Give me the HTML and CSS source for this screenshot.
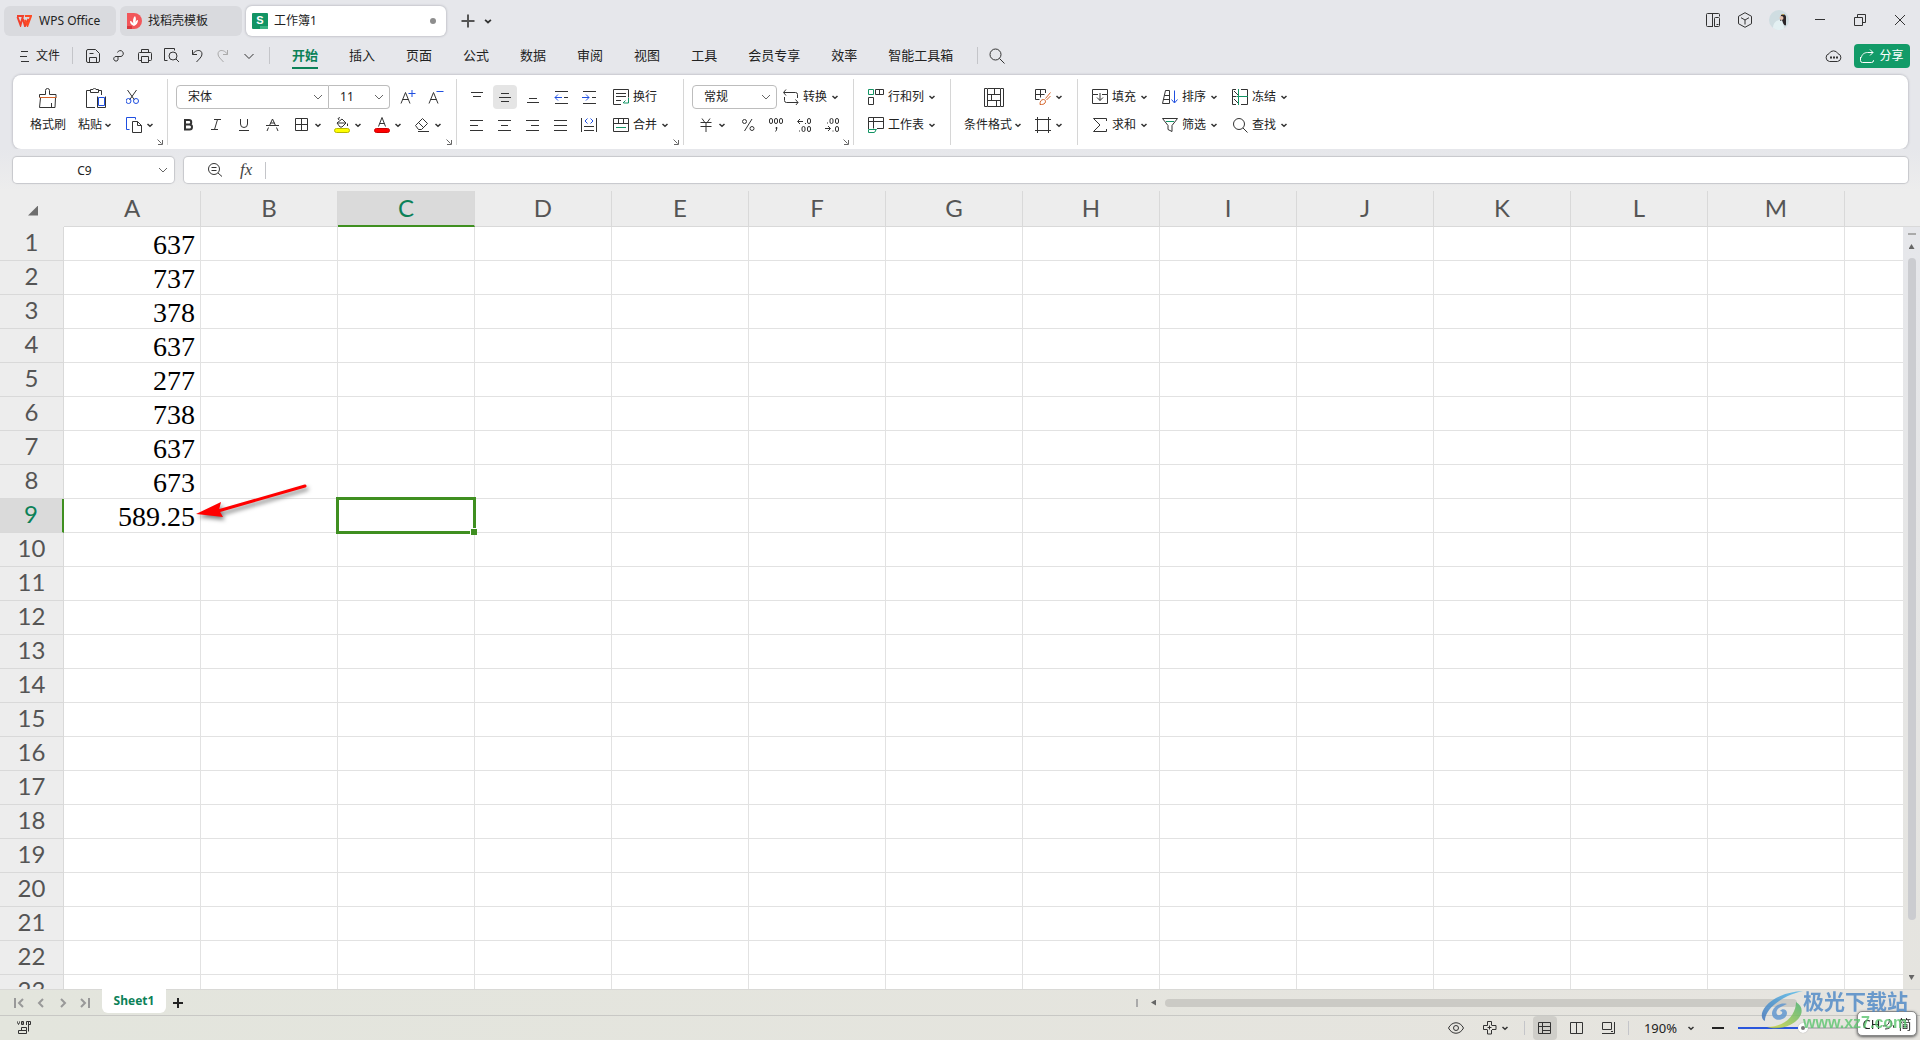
FILE: index.html
```html
<!DOCTYPE html>
<html lang="zh-CN">
<head>
<meta charset="utf-8">
<title>工作簿1 - WPS Office</title>
<link rel="stylesheet" href="styles.css">
</head>
<body>
<svg width="0" height="0" class="defs" aria-hidden="true">
  <symbol id="chev" viewBox="0 0 12 12"><path d="M3.500 5l2.500 2.300L8.500 5" fill="none" stroke="#333" stroke-width="1.500"/></symbol>
  <symbol id="chev-wide" viewBox="0 0 12 12"><path d="M2 4l4 4 4-4" fill="none" stroke="#666"/></symbol>
  <symbol id="launcher" viewBox="0 0 6 6"><path d="M.5.5l4 4M5.500 1v4.500H1" fill="none" stroke="#666"/></symbol>
</svg>

<header class="titlebar">
  <div class="tabs">
    <button class="tab tab-home">
      <svg width="16" height="12" viewBox="0 0 16 12" fill="none" stroke-width="2"><path d="M1 1h6l-2.500 9L1.500 2M7 4l2 7 3.500-7" stroke="#f0402c"/><path d="M9 1h6l-3.500 9.500L9 5" stroke="#ff4a22"/></svg>
      WPS Office</button>
    <button class="tab tab-docer">
      <svg width="16" height="16" viewBox="0 0 16 16"><path d="M1 0h7a7.500 7.500 0 0 1 0 16H1z" fill="#f2565a"/><path d="M1 13h5v3H1z" fill="#d8383e"/><path d="M8 13c-3-1-4-3-4-5 2 0 3 2 3.500 3C6.500 8 7 4.500 9 3c1.500 2 1 5 0 7 .5-1.500 1.500-3 3-3 0 3-1.500 5-4 6z" fill="#fff"/></svg>
      找稻壳模板</button>
    <button class="tab tab-active">
      <svg width="16" height="16" viewBox="0 0 16 16"><rect width="16" height="16" rx="1" fill="#129464"/><path d="M8 13h8v2a1 1 0 0 1-1 1H8z" fill="#3bb384"/><text x="8" y="11" text-anchor="middle" class="logo-s">S</text></svg>
      工作簿1<span class="dot"></span></button>
  </div>
  <button class="icon-btn" aria-label="新建"><svg width="14" height="14" viewBox="0 0 14 14" class="i bold"><path d="M7 .5v13M.5 7h13"/></svg></button>
  <button class="icon-btn narrow" aria-label="标签列表"><svg width="14" height="14"><use href="#chev"/></svg></button>
  <div class="window-tools">
    <button aria-label="侧栏"><svg width="15" height="15" viewBox="0 0 15 15" class="i"><path d="M13.500 3.500v-2a1 1 0 0 0-1-1h-11a1 1 0 0 0-1 1v11a1 1 0 0 0 1 1h5.500M6.500 13.500V.5"/><path d="M8.500 13.500v-8a1 1 0 0 1 1-1h3a1 1 0 0 1 1 1v7a1 1 0 0 1-1 1zM10.500 11.500h2"/></svg></button>
    <button aria-label="应用"><svg width="16" height="16" viewBox="0 0 16 16" class="i"><path d="M8 .7l6.500 3.600v7.400L8 15.300l-6.500-3.600V4.300zM4 5.700L8 8l4-2.300M8 8v4.500"/></svg></button>
    <button aria-label="账户"><svg width="20" height="20" viewBox="0 0 20 20"><circle cx="10" cy="10" r="10" fill="#cfdde1"/><path d="M4 18c0-4 2-7 6-8l4 1 1 7.500a10 10 0 0 1-11-.5z" fill="#e3f0f2"/><path d="M12 5c3-2 5 0 5 2v8c-1 1-2 0-3-2l-1-3-2 1z" fill="#2a2528"/><circle cx="12.500" cy="8" r="2" fill="#e6c2ae"/><path d="M12 5l3-1v1z" fill="#d5a93c"/></svg></button>
    <button aria-label="最小化"><svg width="12" height="12" viewBox="0 0 12 12" class="i"><path d="M1 5.500h10"/></svg></button>
    <button aria-label="还原"><svg width="12" height="12" viewBox="0 0 12 12" class="i"><path d="M.5 3.500h8v8h-8zM3.500 3.500v-3h8v8h-3"/></svg></button>
    <button aria-label="关闭"><svg width="12" height="12" viewBox="0 0 12 12" class="i"><path d="M1 1l10 10M11 1L1 11"/></svg></button>
  </div>
</header>

<nav class="menubar">
  <button class="file"><svg width="9" height="12" viewBox="0 0 9 12" class="i"><path d="M1 1.500h7M0 6.500h7M1 11.500h8"/></svg>文件</button>
  <span class="sep"></span>
  <div class="quick">
    <button aria-label="保存"><svg width="14" height="14" viewBox="0 0 14 14" class="i"><path d="M2 .5h7.500l4 4V12a1.500 1.500 0 0 1-1.500 1.500H2A1.500 1.500 0 0 1 .5 12V2A1.500 1.500 0 0 1 2 .5zM3.500 13.500v-5h7v5M3.500 4.500h4"/></svg></button>
    <button aria-label="链接"><svg width="14" height="14" viewBox="0 0 14 14" class="i"><path d="M5.500 3.500a3 3 0 1 1 3.500 4H4a2.300 2.300 0 1 0 2 3.500V7.500"/></svg></button>
    <button aria-label="打印"><svg width="14" height="14" viewBox="0 0 14 14" class="i"><path d="M3.500 3.500v-3h7v3M3.500 11.500h-2a1 1 0 0 1-1-1v-6a1 1 0 0 1 1-1h11a1 1 0 0 1 1 1v6a1 1 0 0 1-1 1h-2M3.500 7.500h7v6h-7z"/></svg></button>
    <button aria-label="打印预览"><svg width="15" height="15" viewBox="0 0 15 15" class="i"><path d="M3.500 12.500H.5V.5h10v2"/><circle cx="9" cy="8" r="4"/><path d="M12 11l3 3"/></svg></button>
    <button aria-label="撤销"><svg width="12" height="14" viewBox="0 0 12 14" class="i"><path d="M1.500 1v4.500H6M1.500 5.500C4 .5 11 0 11 5c0 3-3 5-5.500 8"/></svg></button>
    <button aria-label="恢复" disabled><svg width="12" height="14" viewBox="0 0 12 14" class="i faint"><path d="M10.500 1v4.500H6M10.500 5.500C8 .5 1 0 1 5c0 3 3 5 5.500 8"/></svg></button>
    <button aria-label="更多"><svg width="12" height="12" viewBox="0 0 12 12" class="i"><path d="M1.500 4L6 8.500 10.500 4"/></svg></button>
  </div>
  <span class="sep"></span>
  <div class="menus">
    <a href="#" class="current">开始</a><a href="#">插入</a><a href="#">页面</a><a href="#">公式</a><a href="#">数据</a><a href="#">审阅</a><a href="#">视图</a><a href="#">工具</a><a href="#">会员专享</a><a href="#">效率</a><a href="#">智能工具箱</a>
  </div>
  <span class="sep"></span>
  <button class="search" aria-label="搜索"><svg width="16" height="16" viewBox="0 0 16 16" class="i"><circle cx="6.500" cy="6.500" r="5.500"/><path d="M10.500 10.500l5 5"/></svg></button>
  <div class="menu-right">
    <button aria-label="云同步"><svg width="17" height="14" viewBox="0 0 17 14" class="i"><path d="M4.500 12.500h8a4 4 0 0 0 .5-7.800 5 5 0 0 0-9 0 4 4 0 0 0 .5 7.800z"/><path d="M5 8.500h2M8 8.500h2M11 8.500h2" stroke-width="2"/></svg></button>
    <button class="share"><svg width="14" height="14" viewBox="0 0 14 14" class="i"><path d="M.5 8v3.500a2 2 0 0 0 2 2h9a2 2 0 0 0 2-2V11M1.500 8.500c0-3 3-5 6-5H13M10 .5l3 3-3 3"/></svg>分享</button>
  </div>
</nav>

<section class="ribbon" aria-label="功能区">
  <div class="group clip">
    <button class="big"><svg width="20" height="20" viewBox="0 0 20 20" class="i"><path d="M1.500 9.500v-3h6V2.500a2 2 0 0 1 4 0v4h6.500v3M2.500 10l-1 9.500h15.500L17.500 10M13.500 15v4.500"/><path d="M1.500 9.500h17" stroke="#d4642a"/></svg><span>格式刷</span></button>
    <button class="big"><svg width="20" height="20" viewBox="0 0 20 20" class="i"><path d="M9 19.500H.5v-17h4M12.500 2.500h3V7M4.500 4.500v-3h2.500c0-1.500 3-1.500 3 0h2.500v3z"/><path d="M11.500 8.500v11M19.500 8.500v11h-8" /><path d="M12.500 9.500h6v8h-6z" stroke="#1f4fe0"/></svg><span>粘贴<svg class="chev"><use href="#chev"/></svg></span></button>
    <div class="stack">
      <button class="t" aria-label="剪切"><svg width="16" height="16" viewBox="2 0 16 16" class="i"><path d="M3.500 1l7 10M12.500 1l-7 10"/><g stroke="#1f4fe0"><circle cx="4.500" cy="12" r="2.500"/><circle cx="12" cy="12" r="2.500"/></g></svg></button>
      <button class="t" aria-label="复制"><svg width="16" height="16" viewBox="0 0 16 16" class="i"><path d="M3.500 12.500H.5V.5h9v2" stroke="#1f4fe0"/><path d="M6.500 4.500h5l4 4v7h-9zM11.500 4.500v4h4"/></svg><svg class="chev"><use href="#chev"/></svg></button>
    </div>
    <svg class="launcher"><use href="#launcher"/></svg>
  </div>

  <div class="group font">
    <div class="row">
      <span class="pick pick-font"><select aria-label="字体"><option>宋体</option></select><svg class="arrow"><use href="#chev-wide"/></svg></span>
      <span class="pick pick-size"><select aria-label="字号"><option>11</option></select><svg class="arrow"><use href="#chev-wide"/></svg></span>
      <button class="b grow" aria-label="增大字号"><svg width="16" height="16" viewBox="0 0 16 16" class="i"><path d="M1 14.500L5.500 3.500 10 14.500M2.500 10.500h6"/><path d="M12 1v7M8.500 4.500h7" stroke="#1f4fe0"/></svg></button>
      <button class="b" aria-label="减小字号"><svg width="16" height="16" viewBox="0 0 16 16" class="i"><path d="M1 14.500L5.500 3.500 10 14.500M2.500 10.500h6"/><path d="M8.500 2.500h7" stroke="#1f4fe0"/></svg></button>
    </div>
    <div class="row">
      <button class="b" aria-label="加粗"><svg width="16" height="16" viewBox="0 0 16 16" class="i"><path class="heavy" d="M5 3h4a2 2 0 0 1 0 4.500H5zM5 7.500h4.500a2.500 2.500 0 0 1 0 5H5z"/></svg></button>
      <button class="b" aria-label="倾斜"><svg width="16" height="16" viewBox="0 0 16 16" class="i"><path d="M6 2.500h7M3 12.500h7M9.500 2.500l-3 10"/></svg></button>
      <button class="b" aria-label="下划线"><svg width="16" height="16" viewBox="0 0 16 16" class="i"><path d="M4.500 2v5a3.500 3.500 0 0 0 7 0V2M3 13.500h10"/></svg></button>
      <button class="b" aria-label="删除线"><svg width="16" height="16" viewBox="0 0 16 16" class="i"><path d="M2 8.500h13M5.500 8.500L8.500 2l3 6.500M4.500 10.500L3 14M12.500 10.500l1.500 3.500M6.500 6h4"/></svg></button>
      <button class="split first" aria-label="边框"><svg width="16" height="16" viewBox="0 0 16 16" class="i"><path d="M1.500 1.500h12v12h-12zM7.500 1.500v12M1.500 7.500h12"/></svg><svg class="chev"><use href="#chev"/></svg></button>
      <button class="split" aria-label="填充颜色"><svg width="16" height="16" viewBox="0 0 16 16" class="i"><path d="M3 6l5-4 4 4-4 4H6zM5 3L4 1.500l2-1M3 6h9M13.500 6.500v2.500"/><rect x=".5" y="11.500" width="15" height="4" rx="2" fill="#ff0" stroke="#b8b800"/></svg><svg class="chev"><use href="#chev"/></svg></button>
      <button class="split" aria-label="字体颜色"><svg width="16" height="16" viewBox="0 0 16 16" class="i"><path d="M4.500 9.500L8 .5l3.500 9M5.500 6.500h5"/><rect x=".5" y="11.500" width="15" height="4" rx="2" fill="#f00" stroke="#c00"/></svg><svg class="chev"><use href="#chev"/></svg></button>
      <button class="split" aria-label="清除"><svg width="16" height="16" viewBox="0 0 16 16" class="i"><path d="M1.500 8.500l7-7 5 5-6 6h-3zM4.500 5.500l5 5M4 14.500h11"/></svg><svg class="chev"><use href="#chev"/></svg></button>
    </div>
    <svg class="launcher"><use href="#launcher"/></svg>
  </div>

  <div class="group align">
    <div class="row">
      <button class="b" aria-label="顶端对齐"><svg width="16" height="16" viewBox="0 0 16 16" class="i"><path d="M2 3.500h12M4 7.500h8"/></svg></button>
      <button class="b on" aria-label="垂直居中"><svg width="16" height="16" viewBox="0 0 16 16" class="i"><path d="M4 4.500h8M2 8.500h12M4 12.500h8"/></svg></button>
      <button class="b" aria-label="底端对齐"><svg width="16" height="16" viewBox="0 0 16 16" class="i"><path d="M4 9.500h8M2 13.500h12"/></svg></button>
      <button class="b" aria-label="减少缩进"><svg width="16" height="16" viewBox="0 0 16 16" class="i"><path d="M2 2.500h13M2 14.500h13M11 8.500h4"/><path d="M9 8.500H2M5 5.500l-3 3 3 3" stroke="#1f4fe0"/></svg></button>
      <button class="b" aria-label="增加缩进"><svg width="16" height="16" viewBox="0 0 16 16" class="i"><path d="M2 2.500h13M2 14.500h13M11 8.500h4"/><path d="M1 8.500h7M5 5.500l3 3-3 3" stroke="#1f4fe0"/></svg></button>
      <button class="t after"><svg width="16" height="16" viewBox="0 0 16 16" class="i"><path d="M8 15.500H.5V.5h15v8M3 4.500h10M3 7.500h10M3 11.500h5"/><path d="M15.500 9v5h-5M12.500 11.500l-2.500 2.500" stroke="#129464"/></svg><span>换行</span></button>
    </div>
    <div class="row">
      <button class="b" aria-label="左对齐"><svg width="16" height="16" viewBox="0 0 16 16" class="i"><path d="M1 3.500h13M1 8.500h8M1 13.500h13"/></svg></button>
      <button class="b" aria-label="居中"><svg width="16" height="16" viewBox="0 0 16 16" class="i"><path d="M1 3.500h13M4 8.500h7M1 13.500h13"/></svg></button>
      <button class="b" aria-label="右对齐"><svg width="16" height="16" viewBox="0 0 16 16" class="i"><path d="M1 3.500h13M6 8.500h8M1 13.500h13"/></svg></button>
      <button class="b" aria-label="两端对齐"><svg width="16" height="16" viewBox="0 0 16 16" class="i"><path d="M1 3.500h13M1 8.500h13M1 13.500h13"/></svg></button>
      <button class="b" aria-label="分散对齐"><svg width="16" height="16" viewBox="0 0 16 16" class="i"><path d="M.5 1v14M15.500 1v14M3 9.500h10M3 13.500h10"/><path d="M6.500 1.500L4 4l2.500 2.500M9.500 1.500L12 4 9.500 6.500" stroke="#1f4fe0"/></svg></button>
      <button class="t after"><svg width="16" height="16" viewBox="0 0 16 16" class="i"><path d="M.5 1.500h15v13H.5zM.5 6.500h15M5.500 1.500v5M10.500 1.500v5"/><path d="M3 10.500h10" stroke="#129464"/></svg><span>合并</span><svg class="chev"><use href="#chev"/></svg></button>
    </div>
    <svg class="launcher"><use href="#launcher"/></svg>
  </div>

  <div class="group number">
    <div class="row">
      <span class="pick pick-format"><select aria-label="数字格式"><option>常规</option></select><svg class="arrow"><use href="#chev-wide"/></svg></span>
      <button class="t convert"><svg width="16" height="16" viewBox="0 0 16 16" class="i"><path d="M3 .5l-2.500 3 2.500 3M1 3.500h11.500a2 2 0 0 1 2 2V9M1.500 8v3.500a2 2 0 0 0 2 2H15M12.500 10.500l2.500 3-2.500 3"/></svg><span>转换</span><svg class="chev"><use href="#chev"/></svg></button>
    </div>
    <div class="row">
      <button class="split" aria-label="货币"><svg width="16" height="16" viewBox="0 0 16 16" class="i"><path d="M4 1.500L6.500 5M12 1.500L9.500 5M2.500 5.500h11M2.500 9.500h11M8 5.500v9.500"/></svg><svg class="chev"><use href="#chev"/></svg></button>
      <button class="b pct" aria-label="百分比"><svg width="16" height="16" viewBox="0 0 16 16" class="i"><circle cx="4.500" cy="4.500" r="2"/><circle cx="12" cy="11.500" r="2"/><path d="M12 2L4.500 14"/></svg></button>
      <button class="b" aria-label="千位分隔"><svg width="16" height="16" viewBox="0 0 16 16" class="i"><rect x="1.500" y="1.500" width="3" height="5" rx="1.500"/><rect x="6.500" y="1.500" width="3" height="5" rx="1.500"/><rect x="11.500" y="1.500" width="3" height="5" rx="1.500"/><path d="M8.500 10v3l-1 1.500M7.500 11h2"/></svg></button>
      <button class="b" aria-label="增加小数位"><svg width="16" height="16" viewBox="0 0 16 16" class="i"><path d="M7 4.500H2M4 2L1.500 4.500 4 7M9 6.500h1M3 14h1"/><rect x="11.500" y="1.500" width="3" height="5" rx="1.500"/><rect x="6" y="9.500" width="3" height="5" rx="1.500"/><rect x="11.500" y="9.500" width="3" height="5" rx="1.500"/></svg></button>
      <button class="b" aria-label="减少小数位"><svg width="16" height="16" viewBox="0 0 16 16" class="i"><path d="M1 11.500h5M4 9l2.500 2.500L4 14M8.500 14h1M3 6h1"/><rect x="6" y="1.500" width="3" height="5" rx="1.500"/><rect x="11.500" y="1.500" width="3" height="5" rx="1.500"/><rect x="11.500" y="9.500" width="3" height="5" rx="1.500"/></svg></button>
    </div>
    <svg class="launcher"><use href="#launcher"/></svg>
  </div>

  <div class="group rows">
    <button class="t"><svg width="16" height="16" viewBox="0 0 16 16" class="i"><path d="M7.500 5.500v-5h8v5h-8M11.500.5v5M.5 8.500h5v7h-5z"/><path d="M.5.5h5v5h-5z" stroke="#129464"/></svg><span>行和列</span><svg class="chev"><use href="#chev"/></svg></button>
    <button class="t"><svg width="16" height="16" viewBox="0 0 16 16" class="i"><path d="M.5 12V.5h15v11H9M.5 4.500h15M5.500.5v11"/><path d="M.5 12.500h8c-1 0-1 3-2.500 3H.5z" stroke="#129464"/></svg><span>工作表</span><svg class="chev"><use href="#chev"/></svg></button>
  </div>

  <div class="group cond">
    <button class="big"><svg width="20" height="20" viewBox="0 0 20 20" class="i"><path d="M3 .5H.5v18H3M17 .5h2.500v18H17M3.500.5h13v18h-13zM3.500 6.500h13M3.500 12.500h13M10.500.5v6M7.500 6.500v6M12.500 12.500v6"/></svg><span>条件格式<svg class="chev"><use href="#chev"/></svg></span></button>
    <div class="stack">
      <button class="t" aria-label="单元格样式"><svg width="16" height="16" viewBox="0 0 16 16" class="i"><path d="M10.500 4V.5H.5v10h4M.5 5.500h9M5.500.5v8"/><path d="M15.500 3.500l-5 6M5 15.500c0-3 1-5 3.500-5 2 0 2.500 2 1.500 3.500s-3 1.500-5 1.500zM15.500 7l-4 4" stroke="#d4642a"/></svg><svg class="chev"><use href="#chev"/></svg></button>
      <button class="t" aria-label="单元格"><svg width="16" height="16" viewBox="0 0 16 16" class="i"><path d="M2.500 0v16M13.500 0v16M0 2.500h16M0 13.500h16"/></svg><svg class="chev"><use href="#chev"/></svg></button>
    </div>
  </div>

  <div class="group edit">
    <div class="row">
      <button class="t"><svg width="16" height="16" viewBox="0 0 16 16" class="i"><path d="M6 5.500H.5v-5h15v5H10M.5 5.500v9h15v-9M8 4v7.500M5 8.500l3 3 3-3"/></svg><span>填充</span><svg class="chev"><use href="#chev"/></svg></button>
      <button class="t"><svg width="16" height="16" viewBox="0 0 16 16" class="i"><path d="M3.500 1.500h4v13H.5zM2.500 6.500h5M1.500 10.500h6"/><path d="M12.500 1.500v12M9.500 10.500l3 3.500 3-3.500" stroke="#1f4fe0"/></svg><span>排序</span><svg class="chev"><use href="#chev"/></svg></button>
      <button class="t"><svg width="16" height="16" viewBox="0 0 16 16" class="i"><path d="M4 .5H.5v15H4M9 .5h6.500v5M9 15.500h6.500v-5M15.500 5v6M2 2l4 4M2 10l4 4M.5 7.500h4"/><path d="M6.500 0v16M5 7.500h11" stroke="#129464"/></svg><span>冻结</span><svg class="chev"><use href="#chev"/></svg></button>
    </div>
    <div class="row">
      <button class="t"><svg width="16" height="16" viewBox="0 0 16 16" class="i"><path d="M14.500 4V1.500H1.500L8 8l-6.500 6.500h13V12"/></svg><span>求和</span><svg class="chev"><use href="#chev"/></svg></button>
      <button class="t"><svg width="16" height="16" viewBox="0 0 16 16" class="i"><path d="M.5 1.500h15l-5.500 7v6l-4-2v-4z"/><path d="M4 4.500h8" stroke="#129464"/></svg><span>筛选</span><svg class="chev"><use href="#chev"/></svg></button>
      <button class="t"><svg width="16" height="16" viewBox="0 0 16 16" class="i"><circle cx="7" cy="7" r="5.500"/><path d="M11 11l4.500 4.500"/></svg><span>查找</span><svg class="chev"><use href="#chev"/></svg></button>
    </div>
  </div>
</section>

<div class="formula-row">
  <div class="name-box"><input aria-label="名称框" value="C9"><svg class="arrow"><use href="#chev-wide"/></svg></div>
  <div class="formula">
    <button aria-label="浏览公式结果"><svg width="16" height="16" viewBox="0 0 16 16" class="i"><circle cx="7" cy="7" r="5.500"/><path d="M4.500 5.500h5M4.500 8.500h5M11 11l4 3.500"/></svg></button>
    <button class="fx" aria-label="插入函数">fx</button>
    <span class="sep"></span>
    <input aria-label="编辑栏">
  </div>
</div>

<main class="sheet">
  <div class="grid"><table id="cells"></table></div>
  <div class="vscroll"><i class="split-bar"></i><i class="up"></i><i class="vthumb"></i><i class="down"></i></div>
</main>

<div class="sheet-tabs">
  <div class="nav">
    <button aria-label="首个"><svg width="10" height="10" viewBox="0 0 10 10"><path d="M1 0v10M9 1L5 5l4 4"/></svg></button>
    <button aria-label="上一个"><svg width="10" height="10" viewBox="0 0 10 10"><path d="M7 1L3 5l4 4"/></svg></button>
    <button aria-label="下一个"><svg width="10" height="10" viewBox="0 0 10 10"><path d="M3 1l4 4-4 4"/></svg></button>
    <button aria-label="末个"><svg width="10" height="10" viewBox="0 0 10 10"><path d="M1 1l4 4-4 4M9 0v10"/></svg></button>
  </div>
  <button class="sheet-tab">Sheet1</button>
  <button class="add" aria-label="新建工作表"><svg width="10" height="10" viewBox="0 0 10 10"><path d="M5 0v10M0 5h10" stroke="#222" stroke-width="2"/></svg></button>
  <div class="hscroll"><i class="hsplit"></i><i class="left"></i><i class="hthumb"></i></div>
</div>

<footer class="status">
  <svg class="i macro" width="14" height="14" viewBox="0 0 14 14"><path d="M.5.5v1l1 2 1-2v-1M4.500.5h2v3h-2zM4.500 2h2M9.500 4V.5h4v3h-2M11.500.5v10M4.500 9V6.500h5v3M1.500 9.500v3h8v-3z"/></svg>
  <div class="status-right">
    <button aria-label="护眼"><svg width="16" height="12" viewBox="0 0 16 12" class="i"><path d="M.5 6C4-1 12-1 15.500 6 12 13 4 13 .5 6z"/><circle cx="8" cy="6" r="2.500"/></svg></button>
    <button class="cross" aria-label="阅读模式"><svg width="14" height="14" viewBox="0 0 14 14" class="i"><path d="M4.500 4.500v-4h4v4M4.500 9v4h4V9M4.500 4.500h-4v4h4M9 4.500h4v4H9M4.500 6.500h4M6.500 4.500v4"/></svg><svg class="chev"><use href="#chev"/></svg></button>
    <span class="sep"></span>
    <button class="view on" aria-label="普通视图"><svg width="14" height="12" viewBox="0 0 14 12" class="i"><path d="M.5.5h12v11H.5zM.5 4.500h12M4.500.5v11M4.500 8.500h8"/></svg></button>
    <button class="view" aria-label="分页预览"><svg width="14" height="12" viewBox="0 0 14 12" class="i"><path d="M.5.5h12v11H.5zM6.500.5v11"/></svg></button>
    <button class="view" aria-label="页面布局"><svg width="14" height="12" viewBox="0 0 14 12" class="i"><path d="M.5.5h9v7h-9zM12.500 0v11.500H0M11 9.500H9"/></svg></button>
    <span class="sep"></span>
    <button class="zoom">190%<svg class="chev"><use href="#chev"/></svg></button>
    <button class="minus" aria-label="缩小"><svg width="12" height="12" viewBox="0 0 12 12"><path d="M0 6h12" stroke="#222" stroke-width="2"/></svg></button>
    <input type="range" class="slider" min="0" max="100" value="50" aria-label="缩放">
  </div>
</footer>

<div class="ime">CH<svg width="14" height="12" viewBox="0 0 14 12" class="i"><path d="M3 11c7 0 9-6 4-10 1 4-1 7-6 7M11 7l1 3"/></svg>简</div>
<div class="watermark" aria-hidden="true">
  <svg width="42" height="38" viewBox="0 0 42 38">
    <defs><linearGradient id="swirl-blue" x1="0" y1="1" x2="1" y2="0"><stop offset="0" stop-color="#3a6fb8"/><stop offset="1" stop-color="#4fbdee"/></linearGradient><linearGradient id="swirl-green" x1="0" y1="1" x2="1" y2="0"><stop offset="0" stop-color="#d9d83a"/><stop offset="1" stop-color="#3fae6a"/></linearGradient></defs>
    <path d="M42 0C24 1 12 7 5 15-1 22 0 28 4 30 4 18 20 5 42 0z" fill="url(#swirl-blue)"/>
    <path d="M35 11c10 6 6 17-6 23-8 4-17 4-23 2 10 0 20-4 25-12 3-5 4-9 4-13z" fill="url(#swirl-green)"/>
    <path d="M26 13c-10-3-19 8-13 14 4 4 13 1 13-5 0-4-5-5-7-2 3 0 3 3 0 4-4 1-5-4-1-7 3-2 6-3 8-4z" fill="#5b93cf"/>
  </svg>
  <div class="wm-text"><span class="wm-name">极光下载站</span><span class="wm-url">www.xz7.com</span></div>
</div>
<script src="sheet.js"></script>
</body>
</html>
```
FILE: styles.css
```css
* { box-sizing: border-box; }
body {
  margin: 0; height: 100vh; overflow: hidden;
  display: flex; flex-direction: column;
  background: #e6e7eb;
  font: 12px/16px "Noto Sans", "Noto Sans CJK SC", sans-serif;
  color: #222;
}
button, input, select { font: inherit; color: inherit; }
button { border: 0; padding: 0; background: none; display: flex; align-items: center; justify-content: center; flex: none; }
svg { display: block; flex: none; }
.defs { position: absolute; }
.i { fill: none; stroke: #333; stroke-width: 1; }
.i.bold { stroke-width: 2; stroke: #555; }
.heavy { stroke-width: 2; }
.faint { stroke: #aaa; }
.chev { width: 12px; height: 12px; margin-left: 2px; }
.sep { width: 1px; height: 17px; background: #c4c5c9; flex: none; }

.titlebar { display: flex; align-items: center; height: 42px; padding: 0 0 0 4px; flex: none; }
.tabs { display: flex; gap: 4px; margin-right: 9px; }
.tab { height: 30px; border-radius: 6px; background: #d9dade; justify-content: flex-start; gap: 7px; }
.tab-home { width: 112px; padding-left: 12px; }
.tab-docer { width: 122px; padding-left: 6px; gap: 6px; }
.tab-active { width: 200px; padding: 0 10px 0 6px; gap: 6px; background: #fff; box-shadow: 0 0 2px 1px #c6c7cd; }
.logo-s { font: bold 11px "Liberation Sans", sans-serif; fill: #fff; }
.dot { width: 6px; height: 6px; border-radius: 3px; background: #8d8d8d; margin-left: auto; }
.icon-btn { width: 26px; height: 26px; }
.icon-btn.narrow { width: 14px; }
.window-tools { margin-left: auto; display: flex; align-items: center; }
.window-tools button { width: 40px; height: 30px; margin-top: -2px; }
.window-tools button:nth-child(1) { width: 38px; }
.window-tools button:nth-child(2) { width: 26px; }
.window-tools button:nth-child(3) { width: 42px; }
.window-tools button:last-child { margin-right: 0; }

.menubar { display: flex; align-items: center; height: 27px; padding: 0 10px 0 20px; flex: none; }
.file { gap: 7px; margin-right: 12px; }
.quick { display: flex; margin: 0 7px; }
.quick button { width: 26px; height: 24px; }
.menus { display: flex; gap: 31px; margin: 0 24px 0 22px; font-size: 13px; }
.menus a { color: #222; text-decoration: none; height: 27px; padding-top: 5px; border-bottom: 2px solid transparent; }
.menus a.current { color: #0c8158; border-color: #0c8158; font-weight: bold; }
.search { margin-left: 11px; }
.menu-right { margin-left: auto; display: flex; align-items: center; gap: 12px; }
.share { width: 56px; height: 24px; border-radius: 4px; background: #129b68; color: #fff; gap: 5px; }
.share .i { stroke: #fff; }

.ribbon {
  display: flex; flex: none; margin: 6px 12px 0 13px; padding: 4px 0; min-height: 74px;
  background: #fff; border-radius: 8px; box-shadow: 0 0 2px 1px #c6c7cd;
}
.group { position: relative; display: flex; flex-direction: column; gap: 4px; padding-top: 6px; border-right: 1px solid #d6d6d6; flex: none; }
.group:last-child { border: 0; }
.row { display: flex; align-items: center; height: 24px; }
.stack { display: flex; flex-direction: column; gap: 4px; }
.clip, .cond { flex-direction: row; }
.clip { padding-left: 17px; padding-right: 11px; gap: 12px; }
.font { padding-left: 6px; padding-right: 6px; }
.align { padding-left: 6px; padding-right: 12px; }
.number { padding-left: 8px; padding-right: 7px; }
.rows { padding-left: 14px; padding-right: 12px; }
.cond { padding-left: 13px; padding-right: 12px; gap: 11px; }
.edit { padding-left: 14px; }
.edit .row { gap: 12px; }
.big { flex-direction: column; height: 52px; gap: 9px; justify-content: flex-start; padding-top: 3px; }
.big span { display: flex; align-items: center; }
.big .chev { margin-left: 0; }
.b { width: 24px; height: 24px; margin: 0 2px; border-radius: 4px; }
.b.on { background: #e5e5e5; }
.b.grow { margin-left: 6px; }
.b.pct { margin-left: 4px; }
.split { width: 40px; height: 24px; justify-content: flex-start; padding-left: 6px; }
.split.first { margin-left: 2px; }
.t { height: 24px; justify-content: flex-start; }
.t span { margin-left: 4px; }
.t.after { margin-left: 10px; }
.convert { margin-left: 6px; }
.launcher { position: absolute; right: 4px; bottom: 0; width: 6px; height: 6px; }
.pick { position: relative; height: 24px; border: 1px solid #bdbdbd; border-radius: 4px; display: block; }
.pick select, .name-box input { appearance: none; border: 0; background: none; width: 100%; height: 100%; outline: 0; }
.arrow { position: absolute; right: 4px; top: 5px; width: 12px; height: 12px; pointer-events: none; }
.pick-font { width: 153px; margin-left: 2px; border-radius: 4px 0 0 4px; }
.pick-size { width: 61px; border-radius: 0 4px 4px 0; border-left: 0; }
.pick-format { width: 85px; }
.pick select { padding: 0 0 0 11px; }

.formula-row {
  display: flex; gap: 10px; flex: none; height: 42px; padding: 8px 12px 8px 13px;
  background: linear-gradient(#e6e7eb, #ededed);
}
.name-box, .formula { background: #fff; border-radius: 4px; box-shadow: 0 0 1px 1px #c6c7cb; }
.name-box { position: relative; width: 161px; }
.name-box input { text-align: center; padding: 0 18px 0 0; }
.name-box .arrow { top: 7px; right: 5px; }
.formula { flex: 1; display: flex; align-items: center; padding-left: 23px; }
.fx { font: italic 17px/20px "Liberation Serif", serif; color: #444; margin: 0 13px 0 17px; }
.formula input { flex: 1; border: 0; background: none; outline: 0; }

.sheet { flex: 1; min-height: 0; display: flex; background: #ededed; }
.grid { flex: 1; min-width: 0; overflow: hidden; }
table { table-layout: fixed; width: 100%; border-collapse: separate; border-spacing: 0; }
.c-head { width: 64px; }
.c { width: 137px; }
th, td { padding: 0; height: 34px; border-right: 1px solid #e2e2e2; border-bottom: 1px solid #e2e2e2; }
th { background: #ededed; font: 24px/28px Lato, sans-serif; color: #555; border-color: #d9d9d9; }
thead th { height: 36px; padding-bottom: 2px; }
thead th:first-child { border-color: transparent; }
tbody th { padding-bottom: 4px; }
th.sel { background: #dadada; color: #0c8158; }
thead th.sel { border-bottom: 2px solid #3f8f20; padding-bottom: 1px; }
tbody th.sel { border-right: 2px solid #3f8f20; }
td { position: relative; background: #fff; font: 28px/28px "Liberation Serif", serif; color: #000; text-align: right; padding: 3px 5px 0 0; }
td.front { z-index: 1; }
td:last-child, thead th:last-child { border-right: 0; }
.corner { width: 10px; height: 10px; margin: 6px 0 0 28px; background: #6e6e6e; clip-path: polygon(100% 0, 100% 100%, 0 100%); }
.cursor { position: absolute; inset: -2px; border: 3px solid #3f8f20; pointer-events: none; }
.cursor::after { content: ""; position: absolute; right: -4px; bottom: -4px; width: 6px; height: 6px; background: #3f8f20; border: 1px solid #fff; border-width: 1px 0 0 1px; }
.pointer { position: absolute; left: 130px; bottom: -2px; overflow: visible; filter: drop-shadow(2px 3px 2px rgba(0, 0, 0, .5)); }
.vscroll { width: 17px; margin-top: 35px; border-top: 1px solid #d9d9d9; background: linear-gradient(#e6e7eb, #e5e4df); display: flex; flex-direction: column; align-items: center; padding: 6px 0; }
.split-bar { width: 8px; height: 2px; background: #aaa; }
.up { width: 6px; height: 5px; margin: 9px 0; background: #666; clip-path: polygon(50% 0, 100% 100%, 0 100%); }
.vthumb { width: 8px; flex: 1; border-radius: 4px; background: #cbccd0; margin-bottom: 55px; }
.down { width: 6px; height: 5px; margin-bottom: 3px; background: #666; clip-path: polygon(0 0, 100% 0, 50% 100%); }

.sheet-tabs { display: flex; height: 27px; flex: none; border-top: 1px solid #d9d9d6; border-bottom: 1px solid #c8c8c5; background: linear-gradient(90deg, #e3e5dd, #e6e4df); padding-left: 8px; }
.nav { display: flex; width: 94px; align-items: center; }
.nav button { width: 22px; }
.nav svg { fill: none; stroke: #999; stroke-width: 2; }
.sheet-tab { width: 64px; height: 24px; margin-top: -1px; border-radius: 0 0 6px 6px; background: #fff; color: #0c8158; font-weight: bold; }
.add { width: 24px; }
.hscroll { display: flex; align-items: center; width: 784px; margin-left: auto; padding-right: 123px; }
.hsplit { width: 2px; height: 8px; background: #aaa; }
.left { width: 5px; height: 6px; margin: 0 9px 0 13px; background: #666; clip-path: polygon(100% 0, 100% 100%, 0 50%); }
.hthumb { flex: 1; height: 8px; border-radius: 4px; background: #cbcac5; }

.status { display: flex; align-items: center; height: 24px; flex: none; background: linear-gradient(90deg, #e3e5dd, #e6e4df); padding: 0 52px 0 17px; }
.status-right { margin-left: auto; display: flex; align-items: center; }
.cross { margin: 0 13px 0 19px; }
.status .sep { height: 14px; }
.view { width: 24px; height: 24px; margin-left: 8px; border-radius: 4px; }
.view.on { background: #cfcec9; }
.view + .sep { margin: 0 15px 0 7px; }
.zoom { font-size: 13px; }
.zoom .chev { margin-left: 8px; }
.minus { margin: 0 14px 0 15px; }
.slider { appearance: none; width: 130px; height: 12px; margin: 0; background: linear-gradient(90deg, #2a56dc 50%, #bbb 50%) center / 100% 2px no-repeat; }
.slider::-webkit-slider-thumb { appearance: none; width: 10px; height: 10px; border-radius: 5px; background: #777; border: 3px solid #fff; box-shadow: 0 0 1px #999; }

.ime { position: fixed; right: 3px; bottom: 4px; width: 60px; height: 25px; display: flex; align-items: center; justify-content: center; gap: 2px; background: #fff; border: 1px solid #888; border-radius: 5px; box-shadow: 0 1px 3px #555; font-size: 13px; }
.watermark { position: fixed; right: 10px; bottom: 8px; display: flex; opacity: .8; pointer-events: none; }
.watermark > svg { margin-top: 2px; }
.wm-text { display: flex; flex-direction: column; gap: 3px; width: 107px; white-space: nowrap; }
.wm-name { font: bold 21px/22px "Noto Sans CJK SC", sans-serif; color: #4a86c6; }
.wm-url { font: bold 16px/18px "Liberation Sans", sans-serif; color: #5cc56f; }
```
FILE: sheet.js
```js
const values = ['637', '737', '378', '637', '277', '738', '637', '673', '589.25'];
const columns = 'ABCDEFGHIJKLM'.split('');
const rowCount = 23;
const active = { col: 'C', row: 9 };

const arrow = '<svg class="pointer" width="114" height="52" viewBox="0 0 114 52">' +
  '<path d="M111 4L24 29" stroke="#f00" stroke-width="3" stroke-linecap="round"/>' +
  '<path d="M2 32l25-12-2 8 4 7z" fill="#f00"/></svg>';

let html = '<colgroup><col class="c-head">' + '<col class="c">'.repeat(columns.length) + '<col></colgroup>';
html += '<thead><tr><th><div class="corner"></div></th>';
for (const c of columns) html += `<th class="${c === active.col ? 'sel' : ''}">${c}</th>`;
html += '<th></th></tr></thead><tbody>';
for (let r = 1; r <= rowCount; r++) {
  html += `<tr><th class="${r === active.row ? 'sel' : ''}">${r}</th>`;
  for (const c of columns) {
    let content = c === 'A' ? (values[r - 1] || '') : '';
    let cls = '';
    if (c === 'A' && r === values.length) {
      content += arrow;
      cls = 'front';
    }
    if (c === active.col && r === active.row) {
      content = '<div class="cursor"></div>';
      cls = 'front';
    }
    html += `<td class="${cls}">${content}</td>`;
  }
  html += '<td></td></tr>';
}
document.getElementById('cells').innerHTML = html + '</tbody>';
```
